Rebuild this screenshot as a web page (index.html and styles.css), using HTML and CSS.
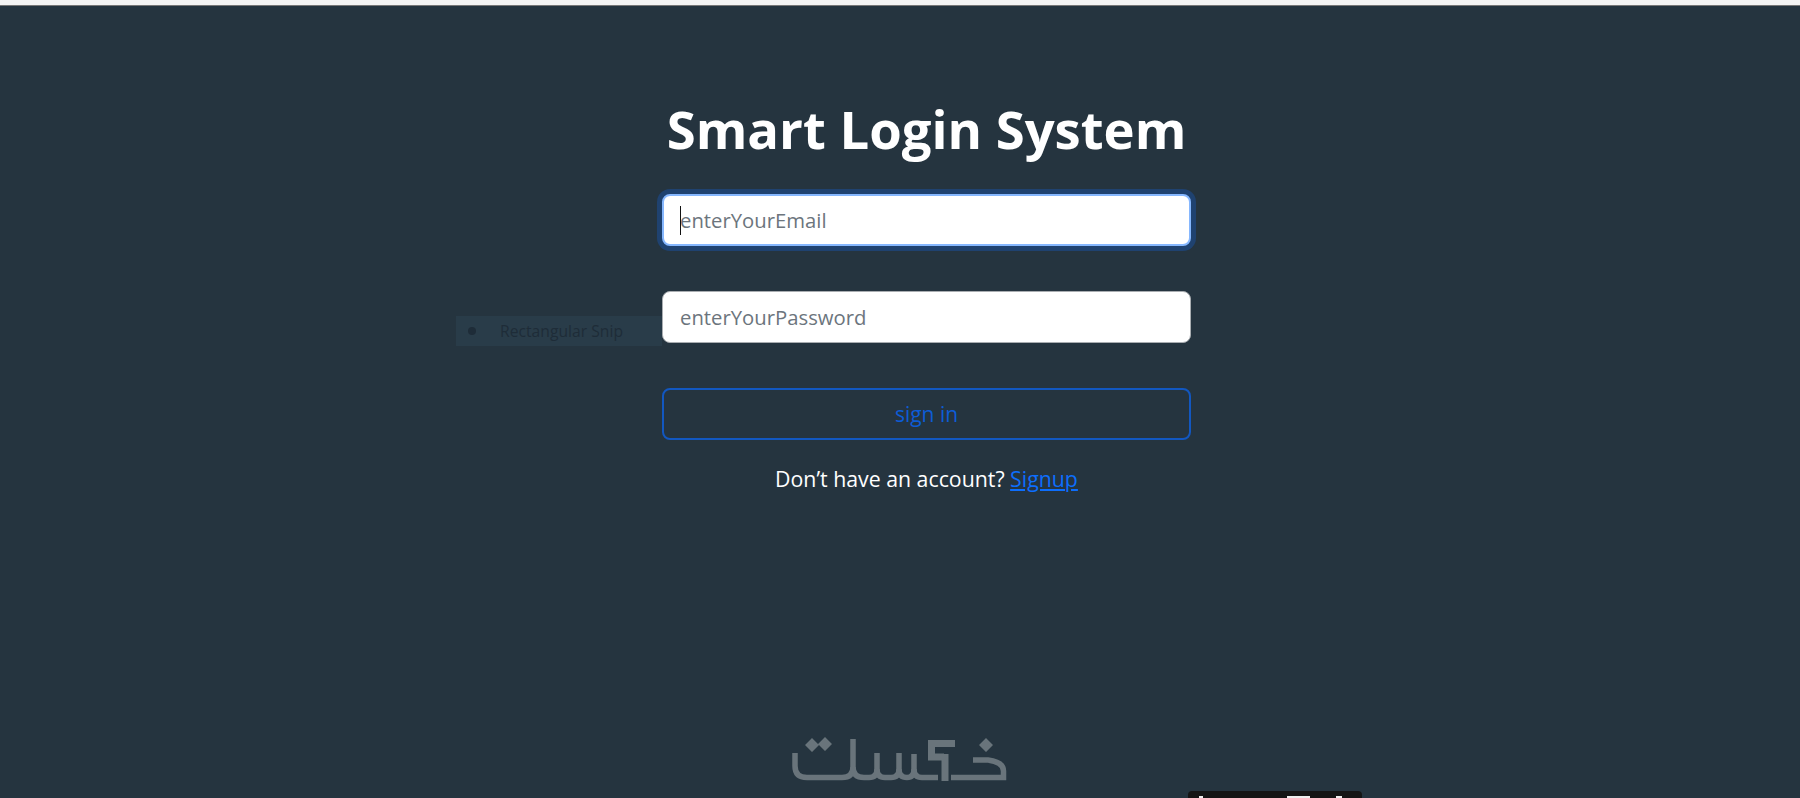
FILE: index.html
```html
<!DOCTYPE html>
<html lang="en">
  <head>
    <meta charset="UTF-8" />
    <title>Smart Login System</title>
    <link rel="stylesheet" href="styles.css">
  </head>
  <body>
    <div class="top-line"></div>
    <main class="login">
      <div class="snip-ghost"><span class="snip-dot"></span><span>Rectangular Snip</span></div>
      <h1 class="login-title">Smart Login System</h1>
      <form class="login-form">
        <div class="login-input is-focus"><span class="caret"></span><span>enterYourEmail</span></div>
        <div class="login-input"><span>enterYourPassword</span></div>
        <div class="login-btn">sign in</div>
      </form>
      <p class="login-note">Don’t have an account? <a href="#">Signup</a></p>
    </main>
    <svg class="watermark" viewBox="0 0 240 68" aria-label="logo">
      <g fill="none" stroke="#69747b" stroke-width="5.500">
        <path d="M15 23V36Q15 47.500 27 47.500H62Q73 47.500 73 37V9"/>
        <path d="M73 37Q73 47.500 84 47.500H89Q97 47.500 97 39V23"/>
        <path d="M97 39Q97 47.500 105 47.500H111Q119 47.500 119 39V23"/>
        <path d="M119 39Q119 47.500 127 47.500Q134 47.500 134 39V24"/>
        <path d="M134 39Q134 47.500 142 47.500H158"/>
        <path d="M171 47.500H223.500V41Q223.500 32 208 30H193"/>
      </g>
      <g fill="none" stroke="#69747b" stroke-width="7">
        <path d="M148 13.500H175M151.500 10V30M148 27H164M165 24V51"/>
      </g>
      <g fill="#69747b">
        <path d="M32 8l7 7-7 7-7-7zM45 7l7 7-7 7-7-7zM206 8l7 7-7 7-7-7z"/>
      </g>
    </svg>
    <div class="black-tab">
      <span class="tab-bit tab-bit-a"></span>
      <span class="tab-bit tab-bit-b"></span>
      <span class="tab-bit tab-bit-c"></span>
    </div>
  </body>
</html>
```

FILE: styles.css
```css
html {
  box-sizing: border-box;
  font-family: "Open Sans", sans-serif;
}

*,
*:before,
*:after {
  box-sizing: inherit;
}

body {
  margin: 0;
  height: 798px;
  overflow: hidden;
  background-color: #25343f;
  position: relative;
}

.top-line {
  height: 6px;
  background-color: #f4f4f4;
  border-bottom: 1px solid #777;
}

.login {
  width: 529px;
  margin-left: 662px;
  padding-top: 93px;
  position: relative;
}

.login-title {
  margin: 0 0 35px;
  font-size: 52.600px;
  line-height: 60px;
  font-weight: 700;
  color: #fff;
  text-align: center;
  white-space: nowrap;
}

.login-form {
  display: flex;
  flex-direction: column;
  gap: 45px;
}

.login-input {
  height: 52px;
  padding: 0 17px;
  display: flex;
  align-items: center;
  position: relative;
  font-size: 20.300px;
  color: #6c757d;
  background-color: #fff;
  border: 1px solid #a9adb1;
  border-radius: 8px;
}

.login-input.is-focus {
  padding: 0 16px;
  border: 2px solid #86b7fe;
  box-shadow: 0 0 0 5px #1f4270;
}

.caret {
  position: absolute;
  left: 16px;
  top: 10px;
  width: 1px;
  height: 29px;
  background-color: #111;
}

.login-btn {
  height: 52px;
  display: flex;
  align-items: center;
  justify-content: center;
  font-size: 21px;
  color: #0d5cd6;
  border: 2px solid #1257c0;
  border-radius: 8px;
}

.login-note {
  margin: 24px 0 0;
  font-size: 21.300px;
  line-height: 30px;
  color: #fff;
  text-align: center;
}

.login-note a {
  color: #0d6efd;
}

.snip-ghost {
  position: absolute;
  left: -206px;
  top: 310px;
  width: 206px;
  height: 30px;
  padding-left: 12px;
  display: flex;
  align-items: center;
  gap: 24px;
  font-size: 15.700px;
  color: #1e2c38;
  background-color: #293c49;
}

.snip-dot {
  width: 8px;
  height: 8px;
  border-radius: 50%;
  background-color: #1e2c38;
}

.watermark {
  position: absolute;
  left: 780px;
  top: 730px;
  width: 240px;
  height: 68px;
}

.black-tab {
  position: absolute;
  left: 1188px;
  top: 791px;
  width: 174px;
  height: 7px;
  background-color: #151515;
  border-radius: 4px 4px 0 0;
}

.tab-bit {
  position: absolute;
  top: 5px;
  height: 2px;
  background-color: #eee;
}

.tab-bit-a {
  left: 11px;
  width: 4px;
}

.tab-bit-b {
  left: 99px;
  width: 23px;
}

.tab-bit-c {
  left: 148px;
  width: 6px;
}
```
